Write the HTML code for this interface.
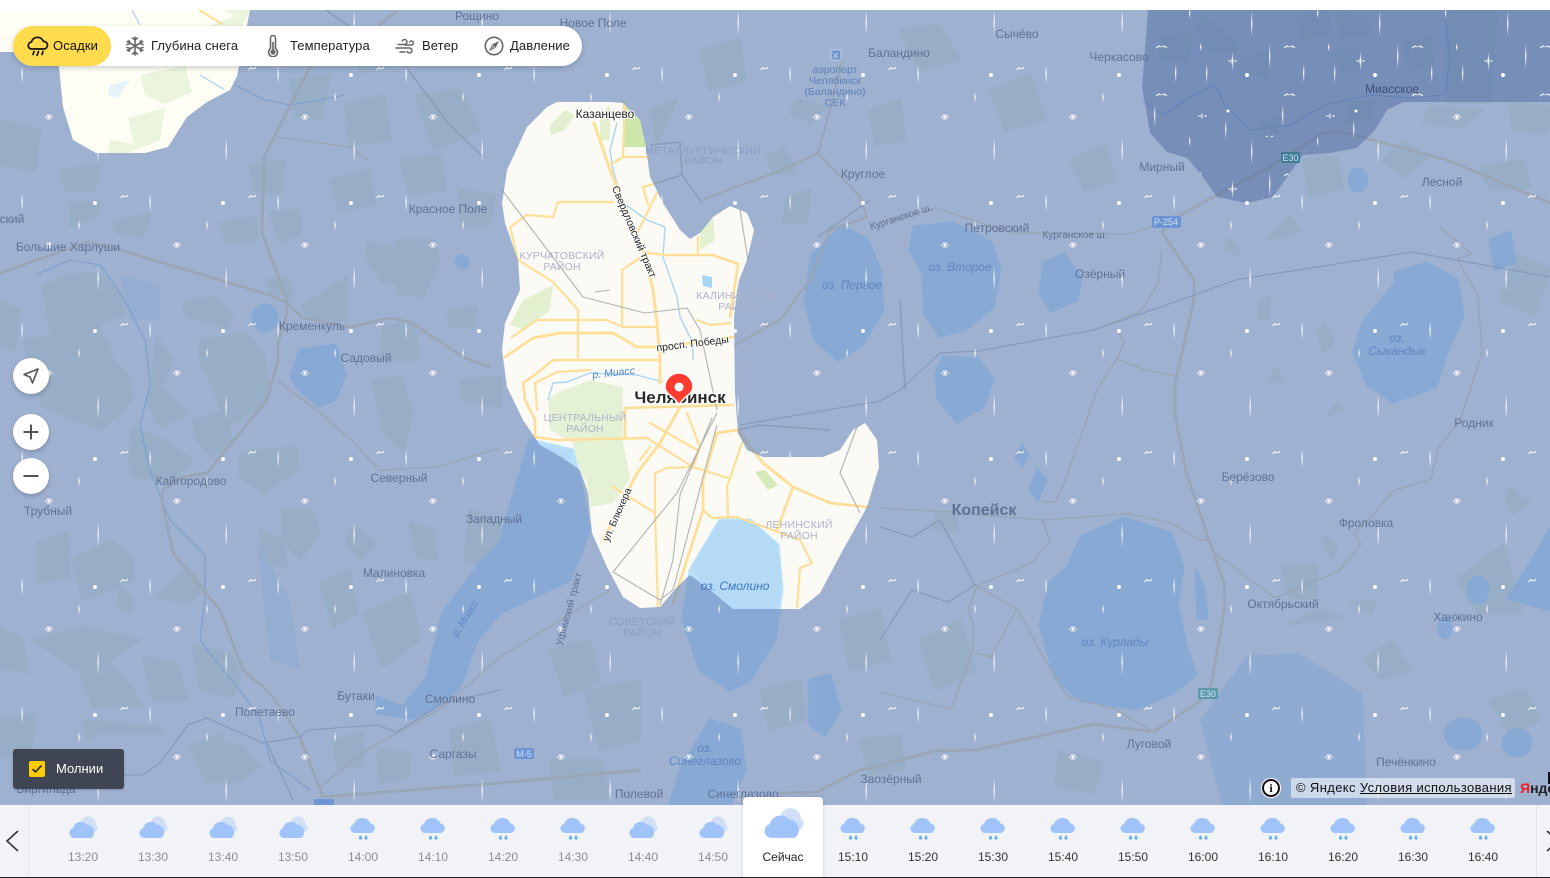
<!DOCTYPE html>
<html lang="ru"><head><meta charset="utf-8"><title>Погодная карта</title>
<style>
*{box-sizing:border-box}
html,body{margin:0;padding:0;width:1550px;height:878px;overflow:hidden;background:#fff;font-family:"Liberation Sans","Noto Sans CJK SC",sans-serif}
#map{position:absolute;left:0;top:0}
#top{position:absolute;left:0;top:0;width:1550px;height:10px;background:#fff}
#pill{position:absolute;left:13px;top:26px;width:569px;height:40px;border-radius:20px;background:#fff;box-shadow:0 2px 6px rgba(0,0,0,.18)}
#pill .y{position:absolute;left:0;top:0;width:98px;height:40px;border-radius:20px;background:#ffdb4d}
#pill span{position:absolute;top:12px;font-size:13px;line-height:16px;color:#222;white-space:nowrap;letter-spacing:.1px}
#pill svg{position:absolute}
.rb{position:absolute;left:13px;width:36px;height:36px;border-radius:50%;background:#fff;box-shadow:0 2px 5px rgba(0,0,0,.2)}
.rb svg{position:absolute;left:0;top:0}
#mol{position:absolute;left:13px;top:749px;width:111px;height:40px;background:#3f4552;border-radius:3px;box-shadow:0 1px 2px rgba(0,0,0,.2)}
#mol i{position:absolute;left:16px;top:12px;width:16px;height:16px;background:#fc0;border-radius:2px}
#mol span{position:absolute;left:43px;top:12px;font-size:13px;line-height:16px;color:#fff}
#info{position:absolute;left:1262px;top:779px;width:18px;height:18px;border-radius:50%;background:#fff;border:2px solid #111;box-shadow:0 0 0 1px #fff;font:bold 12px/14px "Liberation Serif",serif;color:#111;text-align:center}
#copy{position:absolute;left:1291px;top:778px;width:224px;height:20px;background:rgba(255,255,255,.55);border-radius:2px;font-size:13px;line-height:20px;color:#111;padding-left:5px;white-space:nowrap;letter-spacing:.37px}
#copy u{text-decoration:underline}
#ya{position:absolute;left:1520px;top:779px;font-size:14px;line-height:18px;font-weight:bold;color:#222;white-space:nowrap;width:30px;overflow:hidden}
#ya b{color:#e22}
#cur{position:absolute;left:1548px;top:772px;width:2px;height:12px;background:#111}
#bar{position:absolute;left:0;top:805px;width:1550px;height:72px;background:#f1f3f6}
#line{position:absolute;left:0;top:877px;width:1550px;height:1px;background:#222}
#bl{position:absolute;left:28px;top:805px;width:1px;height:72px;background:#e3e5e8}
#br{position:absolute;left:1536px;top:805px;width:1px;height:72px;background:#e3e5e8}
#now{position:absolute;left:743px;top:797px;width:80px;height:81px;background:#fff;border-radius:4px 4px 0 0;box-shadow:0 0 3px rgba(0,0,0,.15)}
.t{position:absolute;width:70px;top:850px;text-align:center;font-size:12px;line-height:15px;color:#333}
.p{color:#8a8e93}
.ic{position:absolute;top:815px}
.ir{position:absolute;top:816px}
</style></head><body>
<svg id="map" width="1550" height="878" viewBox="0 0 1550 878" xmlns="http://www.w3.org/2000/svg">
<defs>
<filter id="soft" x="0" y="0" width="100%" height="100%"><feGaussianBlur stdDeviation=".7"/></filter>
<linearGradient id="g" x1="0" y1="0" x2="0" y2="1"><stop offset="0" stop-color="#fff" stop-opacity="0"/><stop offset=".5" stop-color="#fff" stop-opacity=".95"/><stop offset="1" stop-color="#fff" stop-opacity=".1"/></linearGradient>
<pattern id="rainL" patternUnits="userSpaceOnUse" x="0" y="0" width="128" height="128">
<rect x="97.500" y="10" width="1.300" height="24" fill="url(#g)"/>
<rect x="21.500" y="65" width="1.300" height="18" fill="url(#g)"/>
<rect x="78.500" y="92" width="1.300" height="10" fill="url(#g)"/>
<path d="M120.500 70l2.500-2.500 2 1.500M125.500 69l2.500-1.500 2.500 2.500" stroke="#fff" stroke-width="1.200" fill="none" opacity=".9"/>
<circle cx="95" cy="75" r="2" fill="#fff" opacity=".95"/>
<path d="M44.500 117.500l3.500-1M50 116.500l3.500 1M49 114v6M47 114.500l4 5M51 114.500l-4 5" stroke="#fff" stroke-width=".9" fill="none" opacity=".9"/>
</pattern>
<pattern id="rainD" patternUnits="userSpaceOnUse" x="0" y="0" width="128" height="128">
<rect x="99" y="11" width="1.300" height="24" fill="url(#g)"/>
<rect x="117" y="44" width="1.300" height="24" fill="url(#g)"/>
<rect x="23" y="64" width="1.300" height="18" fill="url(#g)"/>
<rect x="54" y="64" width="1.300" height="18" fill="url(#g)"/>
<rect x="80" y="52" width="1.300" height="18" fill="url(#g)"/>
<rect x="48" y="43" width="1.300" height="8" fill="url(#g)"/>
<rect x="2" y="105" width="1.300" height="20" fill="url(#g)"/>
<rect x="73" y="120" width="1.300" height="18" fill="url(#g)"/>
<rect x="73" y="-8" width="1.300" height="18" fill="url(#g)"/>
<rect x="37" y="8" width="1.300" height="10" fill="url(#g)"/>
<path d="M4 48l3-2 2 1M10 47l2-1 3 2M4 96l3-2 2 1M10 95l2-1 3 2M114 9l2-1M119 9l2-1" stroke="#fff" stroke-width="1.100" fill="none" opacity=".9"/>
<path d="M76 61h3M82 61h3M80 58.500v5M46 116h3M52 116h3M50 113.500v5" stroke="#fff" stroke-width="1.100" fill="none" opacity=".9"/>
<circle cx="95" cy="75" r="2" fill="#fff"/><circle cx="76" cy="111" r="1.500" fill="#fff"/>
</pattern>
<clipPath id="clipL"><path clip-rule="evenodd" d="M0 10H1550V805H0ZM0 10H250L237 76 230 90 207 102 187 117 168 147 145 153H96L73 140 63 107 59 67 57 52H0ZM557 102H610L623 103 640 120 646 147 650 177 663 203 680 230 690 239 700 233 713 217 730 206 747 213 754 230 747 260 738 283 734 317 735 393 738 433 747 450 763 457H823L840 450 853 430 865 423 877 440 879 467 867 507 843 550 820 593 800 609H733L710 590 690 575 677 587 660 607 640 608 623 597 607 567 592 533 588 493 580 470 563 458 540 445 523 420 507 387 502 350 505 323 520 290 518 260 505 223 502 203 507 170 527 127 547 107ZM1148 10L1142 87 1150 133 1167 152 1187 158 1200 173 1217 197 1247 203 1273 197 1287 177 1303 155 1330 153 1357 148 1375 130 1387 110 1403 102H1550V10Z"/></clipPath>
<clipPath id="clipD"><path d="M1148 10L1142 87 1150 133 1167 152 1187 158 1200 173 1217 197 1247 203 1273 197 1287 177 1303 155 1330 153 1357 148 1375 130 1387 110 1403 102H1550V10Z"/></clipPath>
<symbol id="cl1" viewBox="0 0 30 26"><circle cx="20" cy="9" r="7.500" fill="#d0dff5"/><circle cx="25" cy="13" r="4.500" fill="#d0dff5"/><path d="M6 23a5 5 0 0 1-1-9.800 8 8 0 0 1 14-3.400 7 7 0 0 1 7 7 6 6 0 0 1-3 6.200z" fill="#a0c4fa"/></symbol>
<symbol id="cl2" viewBox="0 0 26 26"><path d="M5 17a4.500 4.500 0 0 1-1-8.900 8.700 8.700 0 0 1 16.500-.6 4.800 4.800 0 0 1 .5 9.500z" fill="#a0c4fa"/><path d="M10.500 19c-1 1.500-1.600 2.200-1.600 3a1.600 1.600 0 0 0 3.200 0c0-.8-.6-1.500-1.600-3zM16 19c-1 1.500-1.600 2.200-1.600 3a1.600 1.600 0 0 0 3.200 0c0-.8-.6-1.500-1.600-3z" fill="#64b0ee"/></symbol>
</defs>

<!-- base -->
<rect x="0" y="0" width="1550" height="878" fill="#fbfaf5"/>
<path d="M0 10H250L237 76 230 90 207 102 187 117 168 147 145 153H96L73 140 63 107 59 67 57 52H0Z" fill="#fefef4"/>
<g fill="#ebf4dc"><path d="M140 75L185 66 192 92 165 104 145 95Z"/><path d="M128 118L165 108 160 140 135 150Z"/><path d="M200 30L245 12 238 58 210 62Z"/><path d="M110 140L140 145 130 153 108 153Z"/><path d="M225 10L250 10 245 22Z"/></g>
<path d="M110 85L130 80 118 97 108 96Z" fill="#e4f3fa"/>
<path d="M199 10L222 24" stroke="#ffdf97" stroke-width="2" fill="none"/>
<path d="M132 10L140 25M200 75L225 90" stroke="#a9d6f3" stroke-width="1.300" fill="none"/>

<!-- forests -->
<g fill="#e6f1d6" stroke="#e6f1d6" stroke-width="2.500" stroke-linejoin="round" filter="url(#soft)">
<path d="M43 287L67 275 100 273 123 297 125 313 100 323 100 333 113 353 93 360 50 333 47 313Z"/>
<path d="M25 340L50 337 110 357 127 373 133 397 120 413 100 430 77 420 43 407 27 367Z"/>
<path d="M133 427L163 440 193 460 173 480 133 477 130 460Z"/><path d="M183 303L213 297 233 313 227 327 187 317Z"/><path d="M157 337L173 360 160 387 187 413 160 427 147 400 153 373Z"/>
<path d="M200 340L247 333 263 353 270 387 260 407 227 427 213 387 200 363Z"/><path d="M193 420L220 413 233 440 213 457 197 440Z"/><path d="M300 307L333 287 347 277 347 320 313 320Z"/>
<path d="M267 280L287 277 293 297 270 293Z"/><path d="M270 213L300 210 300 233 280 243Z"/><path d="M220 223L257 217 257 240 227 243Z"/><path d="M113 223L150 213 143 237 117 233Z"/>
<path d="M367 243L393 247 407 283 383 283 367 260Z"/><path d="M397 240L433 240 440 260 423 297 397 293Z"/><path d="M383 327L413 323 420 360 380 360Z"/><path d="M373 380L400 377 413 413 403 453 383 433Z"/>
<path d="M447 310L477 307 473 327 450 327Z"/><path d="M460 380L500 377 500 407 463 400Z"/><path d="M240 453L297 447 297 470 263 493 240 477Z"/><path d="M70 203L100 202 97 217 70 227Z"/>
<path d="M37 543L67 533 70 577 37 583Z"/><path d="M73 560L110 540 133 557 133 580 83 600Z"/><path d="M120 587L133 597 130 613 117 607Z"/><path d="M0 627L23 640 27 673 0 667Z"/>
<path d="M33 640L83 627 110 633 140 640 110 660 77 670Z"/><path d="M80 673L107 660 133 690 143 707 93 707Z"/><path d="M143 657L177 663 187 700 153 700Z"/><path d="M193 647L233 653 240 687 200 687Z"/>
<path d="M187 567L207 590 187 603 157 597Z"/><path d="M83 720L160 727 163 733 100 733 87 740Z"/><path d="M207 740L243 747 260 767 233 783 207 780Z"/><path d="M260 530L283 540 287 567 267 563Z"/>
<path d="M283 510L313 510 320 533 300 560 283 540Z"/><path d="M320 583L350 570 357 613 333 627Z"/><path d="M363 613L410 593 420 640 383 667Z"/><path d="M353 527L377 543 360 560 347 543Z"/>
<path d="M410 523L433 530 437 560 417 557Z"/><path d="M190 747L220 733 233 767 207 783Z"/><path d="M333 740L363 733 363 767 337 767Z"/><path d="M377 750L410 753 410 777 380 783Z"/><path d="M207 667L240 670 233 697 200 690Z"/>
<path d="M470 510L500 520 495 570 465 560Z"/><path d="M0 300L20 310 15 350 0 345Z"/><path d="M0 720L35 715 30 760 0 755Z"/>
<path d="M290 80L330 75 320 120 295 115Z"/><path d="M345 105L385 95 390 140 350 145Z"/><path d="M415 95L460 90 480 130 435 150Z"/><path d="M350 40L385 30 400 65 360 72Z"/><path d="M250 165L285 160 280 195 255 190Z"/><path d="M330 180L370 170 375 205 340 210Z"/><path d="M400 160L440 155 445 190 410 195Z"/><path d="M460 190L495 195 490 225 460 225Z"/><path d="M0 120L40 130 35 170 0 165Z"/><path d="M60 170L100 165 95 190 65 190Z"/>
<path d="M650 110L677 100 657 143Z"/><path d="M767 157L783 147 797 173 773 173Z"/><path d="M797 100L827 107 810 123 790 113Z"/><path d="M787 197L810 190 807 223 783 223Z"/><path d="M700 50L740 40 745 80 710 90Z"/><path d="M870 110L900 100 905 140 875 145Z"/><path d="M900 30L940 25 960 60 920 70Z"/><path d="M990 90L1030 75 1045 120 1005 130Z"/><path d="M1070 160L1105 145 1115 180 1085 190Z"/>
<path d="M840 620L880 610 890 660 850 670Z"/><path d="M920 640L960 620 975 670 935 690Z"/><path d="M760 690L800 680 805 720 770 730Z"/><path d="M585 690L640 680 640 740 600 750Z"/><path d="M450 730L490 720 500 770 455 775Z"/><path d="M550 650L590 640 600 680 565 695Z"/><path d="M550 760L600 760 610 800 555 800Z"/><path d="M860 740L900 735 905 770 870 775Z"/>
<path d="M1290 215L1301 231 1267 240Z"/><path d="M1324 322L1333 342 1324 353 1318 334Z"/><path d="M1277 366L1282 380 1269 380Z"/><path d="M1337 403L1346 409 1329 414Z"/><path d="M1457 579L1504 544 1521 613 1478 613Z"/><path d="M1508 487L1530 502 1512 514 1506 502Z"/><path d="M1282 567L1316 564 1316 598 1290 598Z"/><path d="M1324 537L1337 544 1333 560 1324 548Z"/><path d="M1350 602L1376 602 1371 613Z"/><path d="M1363 659L1393 640 1410 671 1380 678Z"/><path d="M1320 609L1342 617 1286 625Z"/><path d="M1059 751L1102 763 1094 793 1055 786Z"/><path d="M936 514L957 514 957 531 933 529Z"/><path d="M1517 254L1550 269 1534 315 1500 300Z"/><path d="M1230 238L1239 254 1224 250Z"/><path d="M1260 300L1270 296 1268 320 1258 318Z"/><path d="M1490 700L1525 690 1540 720 1510 735Z"/>
<path d="M1203 17L1230 37 1240 50 1210 53 1197 30Z"/><path d="M1163 37L1193 30 1187 60 1160 60Z"/><path d="M1243 57L1273 50 1267 77 1240 73Z"/><path d="M1297 17L1327 10 1330 33 1303 40Z"/><path d="M1337 13L1370 20 1370 37 1340 37Z"/><path d="M1403 43L1430 37 1433 67 1410 70Z"/><path d="M1447 10L1497 10 1493 60 1490 102 1447 102Z"/><path d="M1347 103L1373 100 1370 117 1347 123Z"/><path d="M1260 120L1277 117 1280 133 1263 133Z"/><path d="M1330 53L1357 47 1363 73 1343 70Z"/>
<path d="M1430 107L1483 110 1463 127 1423 123Z"/><path d="M1510 103L1550 107 1547 133 1513 130Z"/><path d="M1303 160L1337 157 1343 187 1310 197Z"/><path d="M1403 140L1430 157 1403 177 1383 160Z"/><path d="M1480 167L1523 160 1530 187 1490 190Z"/>
</g>

<!-- water -->
<g fill="#b9e2fd" stroke="#b9e2fd" stroke-width="3" stroke-linejoin="round">
<path d="M530 440L573 450 580 480 590 530 570 580 500 613 477 640 460 687 443 703 413 718 377 713 377 697 403 707 427 677 443 613 480 563 500 543 515 490Z"/>
<path d="M690 570L720 520 750 520 778 545 782 590 775 640 750 680 730 690 700 670 683 620Z"/>
<path d="M914 227L953 223 991 242 1000 269 993 307 965 330 940 336 925 315 923 273 910 250Z"/>
<path d="M944 357L978 359 993 380 983 407 957 422 938 399 936 372Z"/>
<path d="M1064 254L1081 277 1077 300 1051 311 1040 292 1044 263Z"/>
<path d="M1427 263L1457 280 1463 315 1444 361 1436 387 1393 402 1367 384 1354 353 1363 322 1395 284 1395 273Z"/>
<path d="M1124 518L1171 533 1183 567 1177 606 1188 652 1196 675 1171 694 1136 709 1081 701 1055 678 1040 625 1049 583 1068 567 1081 537Z"/>
<path d="M842 226L868 240 880 270 883 310 862 345 838 360 815 340 805 300 812 255Z"/>
<ellipse cx="265" cy="318" rx="12" ry="13"/><path d="M300 350L335 345 345 375 335 400 318 406 295 385 291 375Z"/><ellipse cx="462" cy="262" rx="6" ry="6"/>
<path d="M680 770L710 720 740 730 745 770 730 805H670Z"/><path d="M810 680L830 675 840 710 825 735 810 725Z"/>
<path d="M1550 529L1530 564 1508 598 1550 610Z"/><ellipse cx="1478" cy="590" rx="10" ry="13"/><ellipse cx="1463" cy="734" rx="18" ry="15"/><ellipse cx="1517" cy="743" rx="14" ry="13"/>
<ellipse cx="1358" cy="180" rx="9" ry="11"/><path d="M1196 570L1204 590 1207 618 1198 618Z"/>
<ellipse cx="1445" cy="628" rx="6" ry="10"/>
<path d="M1037 470L1046 480 1038 500 1030 490Z"/><path d="M1022 445L1028 455 1022 465 1016 458Z"/>
<path d="M1490 240L1510 232 1515 262 1495 270Z"/>
</g>
<g fill="#cfe6f8">
<path d="M1247 655L1299 653 1363 694 1367 805H1222L1200 720Z"/>
<path d="M120 275L160 285 160 320 130 320Z" opacity=".6"/><path d="M257 540L290 600 300 670 270 660Z" opacity=".6"/>
</g>

<!-- rivers -->
<g fill="none" stroke="#95c2f0" stroke-width="1.100" stroke-linejoin="round">
<path d="M35 275L70 260 100 265 115 285 130 310 145 340 150 385 140 425 150 470 170 520 205 555 205 600 200 640 215 660 240 690 260 720 270 760 310 790"/>
<path d="M235 85L265 100 290 105 320 100 345 95"/>
<path d="M1142 100L1165 115 1185 100 1215 85 1225 105 1250 130 1290 125 1325 105 1370 95 1410 98 1445 95 1450 60 1445 20"/>
</g>

<!-- roads -->
<g fill="none" stroke="#efd7a5" stroke-width="2.800" stroke-linejoin="round" stroke-linecap="round">
<path d="M310 67L264 157 262 233 287 300 287 313 278 343 278 360 267 400 220 457 207 473 182 477 163 490 162 500 173 553 220 610 243 670 270 693 300 737 323 797"/>
<path d="M0 273L88 242 120 250 270 295 287 303 303 318 350 327 390 318 410 322 463 357 490 367"/>
<path d="M323 797L500 783 640 770"/>
<path d="M1550 203L1447 160 1343 132 1323 133 1270 167 1213 197 1180 215 1162 232 1194 280 1194 300 1175 384 1175 414 1186 472 1209 540 1224 583 1225 606 1211 686 1200 701 1153 732 1094 724 976 750 933 751 880 766 860 770 817 792 780 793"/>
<path d="M703 200L727 190 777 172 818 153 860 197 867 217 830 230 810 280 780 320 735 345" stroke-width="2.200"/>
<path d="M818 153L830 110 842 60" stroke-width="2"/>
<path d="M398 10L379 25" stroke-width="2.600"/>
</g>
<g fill="none" stroke="#efd7a5" stroke-width="1.600" stroke-linejoin="round">
<path d="M277 380L320 413 348 437 380 470 437 467 500 448"/><path d="M320 787L367 750 443 707 500 657 610 590"/>
<path d="M880 508L950 512 1042 520 1128 514 1171 523 1200 540 1209 540"/><path d="M1042 502L1055 502 1064 483 1098 388 1117 359 1124 342 1117 330"/><path d="M1117 359L1145 370 1177 376"/>
<path d="M880 223L936 208 1012 233 1128 234 1158 225"/><path d="M1162 250L1158 284 1141 311 1094 330"/>
<path d="M1440 227L1472 254 1457 259 1478 296 1482 353 1461 418 1438 449 1431 479 1393 491 1371 518 1354 533 1361 544 1339 571 1275 598 1213 552"/>
<path d="M972 583L1017 609 1049 667 1068 697 1115 709 1153 732"/><path d="M1017 609L991 657 972 652 951 709 880 692"/><path d="M972 652L974 629 968 609 978 585 1030 564 1050 541 1042 520"/>
<path d="M276 137L349 147 368 160"/>
</g>
<g fill="none" stroke="#c2baa8" stroke-width="1.500" stroke-linejoin="round">
<path d="M702 203L682 175 680 142 650 145M682 175L650 185"/><path d="M326 10L406 67 448 123 483 157"/><path d="M818 237L870 200"/>
<path d="M737 430L760 425 830 430"/><path d="M900 300L905 390"/>
</g>
<g fill="none" stroke="#a9adb6" stroke-width="1.100">
<path d="M880 401L900 390 940 353 978 351 1094 330 1192 296 1235 280 1412 252 1550 277"/>
<path d="M83 775L143 775 160 763 188 725 207 718 263 743 300 737 307 730 377 725 397 732 443 703 500 690"/>
<path d="M267 743L293 800"/><path d="M740 425L880 401"/><path d="M880 527L912 537 940 520 975 585 948 602 912 590 880 640"/>
</g>

<!-- city details -->
<path d="M557 393L590 380 623 387 623 443 630 477 623 490 613 503 590 507 587 483 577 463 573 443 550 430 548 400Z" fill="#e5f1d4"/>
<path d="M623 103L640 120 646 147H623Z" fill="#cde7ab"/>
<path d="M550 125L565 110 575 115 565 130 550 135ZM523 300L553 285 550 310 525 330 510 325ZM700 230L713 217 715 240 700 250ZM600 115L610 105 610 140 600 140Z" fill="#e3f0cf"/>
<path d="M755 472L765 470 778 485 768 490Z" fill="#d8e9bc"/>
<path d="M702 275L712 277 712 288 703 286Z" fill="#a8d6f3"/>
<path d="M690 570L720 520 750 520 778 545 782 590 777 610H733L710 590Z" fill="#b5daf5"/>
<path d="M540 445L573 450 570 460 563 458Z" fill="#b5daf5"/>
<g fill="none" stroke="#a8d5f2" stroke-width="1.400" stroke-linejoin="round">
<path d="M617 123L610 150 613 170 623 203 647 220 665 227 663 257 677 297 680 317 693 343 693 360"/>
<path d="M548 400L553 383 567 382 590 373 637 375 663 382"/>
</g>
<g fill="none" stroke="#ffdf97" stroke-width="2.200" stroke-linejoin="round" stroke-linecap="round">
<path stroke-width="3" d="M594 123L610 170 643 250 653 290 657 323 660 357 660 383"/>
<path d="M625 103L623 157 647 157M610 165L623 157"/><path d="M643 187L657 183M643 187L648 205M657 193L637 233"/>
<path d="M510 227L527 215 553 217 558 202 613 202"/><path d="M510 227L518 260 553 282 578 310V357"/>
<path stroke-width="2.600" d="M647 253L667 255 713 255 738 264 730 317"/><path d="M622 270L647 253M622 270V327M698 237V253"/>
<path d="M512 337L537 320H607L623 327H657"/><path stroke-width="2.800" d="M505 357L533 338 560 333H613L637 347H657L693 343 733 337"/>
<path d="M697 320L710 325 730 323"/>
<path stroke-width="2.600" d="M523 383L537 373 553 360H657"/><path stroke-width="2.600" d="M523 383L525 400 535 420V437L557 440 647 438"/>
<path d="M535 383L557 372 590 370M535 383L537 410"/>
<path stroke-width="3" d="M603 540L637 473 660 443 680 407"/>
<path stroke-width="2.600" d="M625 408V438M625 408L733 405"/>
<path d="M640 460L650 447M650 423L697 450M647 438L693 467 728 478"/><path d="M687 413L700 447 693 467"/>
<path d="M655 473L667 468 693 467M655 473V513L658 607M613 487L655 513"/>
<path stroke-width="2.800" d="M717 433L737 430M717 433L703 480V510L673 603"/>
<path d="M703 510L712 518 737 517 800 540 812 563 800 568 797 607"/>
<path d="M742 443L727 487 728 517"/>
<path stroke-width="2.800" d="M737 430L763 463 793 487 830 503 867 507"/><path stroke-width="2.800" d="M793 487L777 530"/>
</g>
<g fill="none" stroke="#b2b2b2" stroke-width="1.100" stroke-linejoin="round">
<path d="M502 190L583 297 645 313 687 308 700 330 717 410"/><path d="M717 413L677 493 613 572 660 600"/><path d="M717 425L673 590 660 600"/><path d="M712 418L680 495 673 560 660 605"/>
<path d="M857 427L840 473 860 513"/><path d="M595 292L610 290"/><path d="M740 210L748 260"/>
</g>

<!-- rain overlay -->
<path fill="#6d8bbd" fill-opacity=".66" fill-rule="evenodd" d="M0 10H1550V805H0ZM0 10H250L237 76 230 90 207 102 187 117 168 147 145 153H96L73 140 63 107 59 67 57 52H0ZM557 102H610L623 103 640 120 646 147 650 177 663 203 680 230 690 239 700 233 713 217 730 206 747 213 754 230 747 260 738 283 734 317 735 393 738 433 747 450 763 457H823L840 450 853 430 865 423 877 440 879 467 867 507 843 550 820 593 800 609H733L710 590 690 575 677 587 660 607 640 608 623 597 607 567 592 533 588 493 580 470 563 458 540 445 523 420 507 387 502 350 505 323 520 290 518 260 505 223 502 203 507 170 527 127 547 107Z"/>
<path fill="#3d5a96" fill-opacity=".4" d="M1148 10L1142 87 1150 133 1167 152 1187 158 1200 173 1217 197 1247 203 1273 197 1287 177 1303 155 1330 153 1357 148 1375 130 1387 110 1403 102H1550V10Z"/>

<rect x="0" y="10" width="1550" height="795" fill="url(#rainL)" clip-path="url(#clipL)"/>
<rect x="1130" y="10" width="420" height="200" fill="url(#rainD)" clip-path="url(#clipD)"/>

<!-- road badges -->
<g font-family="Liberation Sans,sans-serif" font-size="9" text-anchor="middle" fill="#cfe0f5">
<rect x="1281" y="152" width="19" height="11" rx="2" fill="#3f7c97"/><text x="1290.500" y="161">E30</text>
<rect x="1152" y="216" width="29" height="12" rx="2" fill="#6e95d4"/><text x="1166" y="225">P-254</text>
<rect x="1198" y="688" width="20" height="11" rx="2" fill="#5a9aa8"/><text x="1208" y="697">E30</text>
<rect x="514" y="748" width="20" height="11" rx="2" fill="#6e95d4"/><text x="524" y="757">M-5</text>
<rect x="314" y="799" width="20" height="6" rx="1" fill="#6e95d4"/>
</g>
<path d="M831 50h10v10h-10zM833 53l5 5M838 53l-5 5" fill="#6f93c9" stroke="#cfe0f5" stroke-width=".8"/>

<!-- labels -->
<g font-family="Liberation Sans,sans-serif" font-size="12" fill="#5f7196" text-anchor="middle">
<text x="477" y="20">Рощино</text><text x="593" y="27">Новое Поле</text><text x="1017" y="38">Сычёво</text><text x="899" y="57">Баландино</text><text x="1119" y="61">Черкасово</text>
<text x="1392" y="93" fill="#3c5078">Миасское</text><text x="863" y="178">Круглое</text><text x="1162" y="171">Мирный</text><text x="1442" y="186">Лесной</text>
<text x="448" y="213">Красное Поле</text><text x="12" y="223">ский</text><text x="68" y="251">Большие Харлуши</text><text x="997" y="232">Петровский</text>
<text x="1075" y="238" font-size="10">Курганское ш.</text><text x="902" y="220" font-size="10" transform="rotate(-18 902 220)">Курганское ш.</text>
<text x="1100" y="278">Озёрный</text><text x="312" y="330">Кременкуль</text><text x="366" y="362">Садовый</text><text x="1474" y="427">Родник</text>
<text x="191" y="485">Кайгородово</text><text x="399" y="482">Северный</text><text x="1248" y="481">Берёзово</text><text x="48" y="515">Трубный</text><text x="494" y="523">Западный</text>
<text x="1366" y="527">Фроловка</text><text x="394" y="577">Малиновка</text><text x="1283" y="608">Октябрьский</text><text x="1458" y="621">Ханжино</text>
<text x="356" y="700">Бутаки</text><text x="450" y="703">Смолино</text><text x="265" y="716">Полетаево</text><text x="453" y="758">Саргазы</text><text x="1149" y="748">Луговой</text>
<text x="1406" y="766">Печёнкино</text><text x="891" y="783">Заозёрный</text><text x="639" y="798">Полевой</text><text x="743" y="798">Синеглазово</text><text x="46" y="793">Биргильда</text>
<text x="984" y="515" font-size="16" font-weight="bold" fill="#5f7196">Копейск</text>
</g>
<g font-family="Liberation Sans,sans-serif" font-size="10.500" fill="#5d80b8" text-anchor="middle">
<text x="835" y="73">аэропорт</text><text x="835" y="84">Челябинск</text><text x="835" y="95">(Баландино)</text><text x="835" y="106">СЕК</text>
</g>
<g font-family="Liberation Sans,sans-serif" font-size="10.500" text-anchor="middle" fill="#86a0c8" letter-spacing=".2">
<text x="703" y="154">МЕТАЛЛУРГИЧЕСКИЙ</text><text x="703" y="164">РАЙОН</text><text x="642" y="625">СОВЕТСКИЙ</text><text x="642" y="636">РАЙОН</text>
</g>
<g font-family="Liberation Sans,sans-serif" font-size="10.500" text-anchor="middle" fill="#aeb2cc" letter-spacing=".2">
<text x="562" y="259">КУРЧАТОВСКИЙ</text><text x="562" y="270">РАЙОН</text><text x="737" y="299">КАЛИНИНСКИЙ</text><text x="737" y="310">РАЙОН</text>
<text x="585" y="421">ЦЕНТРАЛЬНЫЙ</text><text x="585" y="432">РАЙОН</text><text x="799" y="528">ЛЕНИНСКИЙ</text><text x="799" y="539">РАЙОН</text>
</g>
<g font-family="Liberation Sans,sans-serif" font-size="12" font-style="italic" text-anchor="middle" fill="#5f86c4">
<text x="852" y="289">оз. Первое</text><text x="960" y="271">оз. Второе</text><text x="1397" y="342">оз.</text><text x="1397" y="355">Сыкандык</text><text x="1115" y="646">оз. Курлады</text>
<text x="705" y="752">оз.</text><text x="705" y="765">Синеглазово</text><text x="735" y="590" fill="#3f76c0">оз. Смолино</text>
<text x="614" y="376" font-size="10.500" fill="#4a85d0" transform="rotate(-6 614 376)">р. Миасс</text>
<text x="468" y="620" font-size="10" transform="rotate(-58 468 620)">р. Миасс</text>
</g>
<g font-family="Liberation Sans,sans-serif" font-size="11" fill="#222" text-anchor="middle" paint-order="stroke" stroke="#fff" stroke-width="2">
<text x="605" y="118" font-size="12" stroke-width="2">Казанцево</text>
<text x="631" y="233" transform="rotate(67 631 233)" font-size="10.500">Свердловский тракт</text>
<text x="693" y="347" transform="rotate(-7 693 347)" font-size="10.500">просп. Победы</text>
<text x="620" y="516" transform="rotate(-66 620 516)" font-size="10">ул. Блюхера</text>
</g>
<text x="572" y="610" font-family="Liberation Sans,sans-serif" font-size="10" fill="#5f7196" text-anchor="middle" transform="rotate(-75 572 610)">Уфимский тракт</text>
<text x="680" y="403" font-family="Liberation Sans,sans-serif" font-size="17" font-weight="bold" fill="#2a2a2a" text-anchor="middle" paint-order="stroke" stroke="#fff" stroke-width="2">Челябинск</text>
<path d="M679 405C675 397 665 394 665 387a14 14 0 0 1 28 0C693 394 683 397 679 405Z" fill="#ff3b30" stroke="#fff" stroke-width="1.500"/>
<circle cx="679" cy="387" r="4.500" fill="#fff"/>
</svg>

<div id="top"></div>

<div id="pill">
<div class="y"></div>
<svg style="left:14px;top:9px" width="22" height="22" viewBox="0 0 22 22" fill="none" stroke="#111" stroke-width="1.700" stroke-linecap="round"><path d="M5.500 14H5a3.500 3.500 0 0 1-.6-7 6.300 6.300 0 0 1 12-.6 3.800 3.800 0 0 1 .6 7.600H5.500zM7 16.500l-1 3M11.500 16.500l-1.500 4M16 16.500l-1 3"/></svg>
<span style="left:40px;color:#111">Осадки</span>
<svg style="left:111px;top:9px" width="22" height="22" viewBox="0 0 22 22" fill="none" stroke="#666" stroke-width="1.600" stroke-linecap="round"><path d="M11 2v18M3.200 6.500l15.600 9M3.200 15.500l15.600-9M8.500 3l2.500 2 2.500-2M8.500 19l2.500-2 2.500 2M3 9.500l3-.9-.8-3M19 12.500l-3 .9.8 3M3 12.500l3 .9-.8 3M19 9.500l-3-.9.8-3"/></svg>
<span style="left:138px">Глубина снега</span>
<svg style="left:250px;top:9px" width="20" height="22" viewBox="0 0 20 22" fill="none" stroke="#666" stroke-width="1.600"><path d="M7.500 3a2.500 2.500 0 0 1 5 0v10.500a4.500 4.500 0 1 1-5 0z"/><circle cx="10" cy="17" r="1.800" fill="#666"/><path d="M10 15V7"/></svg>
<span style="left:277px">Температура</span>
<svg style="left:381px;top:9px" width="22" height="22" viewBox="0 0 22 22" fill="none" stroke="#666" stroke-width="1.500" stroke-linecap="round"><path d="M2 13H15.500a2.500 2.500 0 1 1-2.300 3.500M6 17h5M4 9.500h6.500a2.500 2.500 0 1 0-2.300-3.500M11 10h6.500a2 2 0 1 0-1.800-3"/></svg>
<span style="left:409px">Ветер</span>
<svg style="left:470px;top:9px" width="22" height="22" viewBox="0 0 22 22" fill="none" stroke="#666" stroke-width="1.600"><circle cx="11" cy="11" r="8.700"/><path d="M16 6l-3.500 7-3.500-3.500z" fill="#666" stroke="none"/><path d="M7 15l2-4 2 2z" fill="#fff" stroke="#666" stroke-width="1"/></svg>
<span style="left:497px">Давление</span>
</div>

<div class="rb" style="top:358px"><svg width="36" height="36" fill="none" stroke="#555" stroke-width="1.600" stroke-linejoin="round"><path d="M25 11L11 16.500 17 19 19.500 25z"/></svg></div>
<div class="rb" style="top:414px"><svg width="36" height="36" fill="none" stroke="#555" stroke-width="2"><path d="M18 10.500v15M10.500 18h15"/></svg></div>
<div class="rb" style="top:458px"><svg width="36" height="36" fill="none" stroke="#555" stroke-width="2"><path d="M10.500 18h15"/></svg></div>

<div id="mol"><i><svg width="16" height="16" fill="none" stroke="#333" stroke-width="1.800" style="display:block"><path d="M3.500 8l3 3 6-6.500"/></svg></i><span>Молнии</span></div>

<div id="info">i</div>
<div id="copy">© Яндекс <u>Условия использования</u></div>
<div id="ya"><b>Я</b>ндекс</div>
<div id="cur"></div>

<div id="bar"></div><div id="bl"></div><div id="br"></div>
<svg style="position:absolute;left:0;top:805px" width="28" height="72" fill="none" stroke="#333" stroke-width="1.600"><path d="M18 26L7 36 18 46"/></svg>
<svg style="position:absolute;left:1537px;top:805px" width="13" height="72" fill="none" stroke="#333" stroke-width="1.600"><path d="M10 26L21 36 10 46"/></svg>

<div id="now"></div>
<svg class="ic" style="left:761px;top:806px" width="45" height="36"><use href="#cl1" width="45" height="36"/></svg>
<div class="t" style="left:748px;color:#222">Сейчас</div>

<svg class="ic" style="left:68px" width="30" height="26"><use href="#cl1" width="30" height="26"/></svg><div class="t p" style="left:48px">13:20</div>
<svg class="ic" style="left:138px" width="30" height="26"><use href="#cl1" width="30" height="26"/></svg><div class="t p" style="left:118px">13:30</div>
<svg class="ic" style="left:208px" width="30" height="26"><use href="#cl1" width="30" height="26"/></svg><div class="t p" style="left:188px">13:40</div>
<svg class="ic" style="left:278px" width="30" height="26"><use href="#cl1" width="30" height="26"/></svg><div class="t p" style="left:258px">13:50</div>
<svg class="ir" style="left:350px" width="26" height="26"><use href="#cl2" width="26" height="26"/></svg><div class="t p" style="left:328px">14:00</div>
<svg class="ir" style="left:420px" width="26" height="26"><use href="#cl2" width="26" height="26"/></svg><div class="t p" style="left:398px">14:10</div>
<svg class="ir" style="left:490px" width="26" height="26"><use href="#cl2" width="26" height="26"/></svg><div class="t p" style="left:468px">14:20</div>
<svg class="ir" style="left:560px" width="26" height="26"><use href="#cl2" width="26" height="26"/></svg><div class="t p" style="left:538px">14:30</div>
<svg class="ic" style="left:628px" width="30" height="26"><use href="#cl1" width="30" height="26"/></svg><div class="t p" style="left:608px">14:40</div>
<svg class="ic" style="left:698px" width="30" height="26"><use href="#cl1" width="30" height="26"/></svg><div class="t p" style="left:678px">14:50</div>
<svg class="ir" style="left:840px" width="26" height="26"><use href="#cl2" width="26" height="26"/></svg><div class="t" style="left:818px">15:10</div>
<svg class="ir" style="left:910px" width="26" height="26"><use href="#cl2" width="26" height="26"/></svg><div class="t" style="left:888px">15:20</div>
<svg class="ir" style="left:980px" width="26" height="26"><use href="#cl2" width="26" height="26"/></svg><div class="t" style="left:958px">15:30</div>
<svg class="ir" style="left:1050px" width="26" height="26"><use href="#cl2" width="26" height="26"/></svg><div class="t" style="left:1028px">15:40</div>
<svg class="ir" style="left:1120px" width="26" height="26"><use href="#cl2" width="26" height="26"/></svg><div class="t" style="left:1098px">15:50</div>
<svg class="ir" style="left:1190px" width="26" height="26"><use href="#cl2" width="26" height="26"/></svg><div class="t" style="left:1168px">16:00</div>
<svg class="ir" style="left:1260px" width="26" height="26"><use href="#cl2" width="26" height="26"/></svg><div class="t" style="left:1238px">16:10</div>
<svg class="ir" style="left:1330px" width="26" height="26"><use href="#cl2" width="26" height="26"/></svg><div class="t" style="left:1308px">16:20</div>
<svg class="ir" style="left:1400px" width="26" height="26"><use href="#cl2" width="26" height="26"/></svg><div class="t" style="left:1378px">16:30</div>
<svg class="ir" style="left:1470px" width="26" height="26"><use href="#cl2" width="26" height="26"/></svg><div class="t" style="left:1448px">16:40</div>
<div id="line"></div>
</body></html>
